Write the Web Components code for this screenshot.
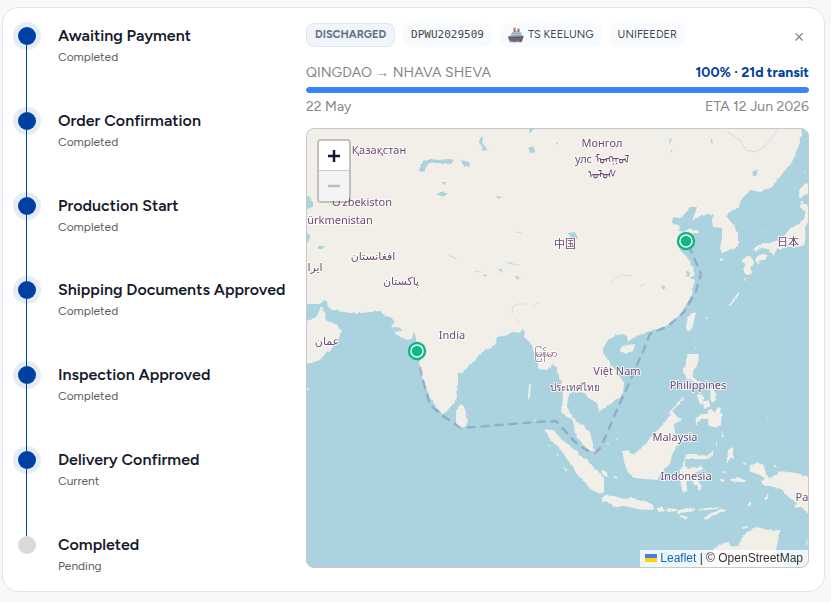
<!DOCTYPE html>
<html lang="en">
<head>
<meta charset="utf-8">
<meta name="viewport" content="width=device-width, initial-scale=1">
<title>Shipment tracking</title>
<style>
  body { margin: 7px 6px 10px 2px; background: #f8f8f8; color: #15192b; font: 14px/20px Figtree, Inter, "Liberation Sans", sans-serif; }
  .arrow { font-family: "Liberation Sans", sans-serif; line-height: 1; }
</style>
</head>
<body>
<shipment-card>
  <step-list slot="steps">
    <step-item status="Completed">Awaiting Payment</step-item>
    <step-item status="Completed">Order Confirmation</step-item>
    <step-item status="Completed">Production Start</step-item>
    <step-item status="Completed">Shipping Documents Approved</step-item>
    <step-item status="Completed">Inspection Approved</step-item>
    <step-item status="Current">Delivery Confirmed</step-item>
    <step-item status="Pending" pending>Completed</step-item>
  </step-list>
  <tag-chip slot="tags" kind="state">DISCHARGED</tag-chip>
  <tag-chip slot="tags" kind="code">DPWU2029509</tag-chip>
  <tag-chip slot="tags"><ship-icon></ship-icon>TS KEELUNG</tag-chip>
  <tag-chip slot="tags">UNIFEEDER</tag-chip>
  <voyage-progress slot="progress" value="100">
    <span slot="route">QINGDAO <span class="arrow">→</span> NHAVA SHEVA</span>
    <span slot="summary">100% · 21d transit</span>
    <span slot="from">22 May</span>
    <span slot="to">ETA 12 Jun 2026</span>
  </voyage-progress>
  <route-map slot="map"></route-map>
</shipment-card>

<script>
const define = (name, html) => {
  const template = document.createElement('template');
  template.innerHTML = html;
  customElements.define(name, class extends HTMLElement {
    connectedCallback() {
      if (this.shadowRoot) return;
      this.attachShadow({ mode: 'open' }).append(template.content.cloneNode(true));
      const status = this.shadowRoot.querySelector('[data-status]');
      if (status) status.textContent = this.getAttribute('status');
      const bar = this.shadowRoot.querySelector('progress');
      if (bar) bar.value = Number(this.getAttribute('value'));
    }
  });
};

define('shipment-card', `
<style>
  :host { display: grid; grid-template-columns: 268px minmax(0, 1fr); gap: 20px; padding: 15px; background: #fff; border: 1px solid #d9e5f2; border-radius: 16px; }
  section { display: flex; flex-direction: column; padding-bottom: 8px; }
  header { display: flex; justify-content: space-between; align-items: center; margin-bottom: 16px; }
  .tags { display: flex; gap: 8px; }
  button { width: 20px; height: 24px; padding: 4px 0 0; border: 0; background: none; color: #8a8a8a; font: 18px/20px "Liberation Sans", sans-serif; cursor: pointer; }
</style>
<slot name="steps"></slot>
<section>
  <header><div class="tags"><slot name="tags"></slot></div><button type="button" aria-label="Close">×</button></header>
  <slot name="progress"></slot>
  <slot name="map"></slot>
</section>`);

define('step-list', `
<style>
  :host { display: flex; flex-direction: column; padding-top: 4px; }
</style><slot></slot>`);

define('step-item', `
<style>
  :host { display: flex; gap: 22px; flex: 1 0 0; }
  :host([pending]) { flex: none; }
  .rail { display: flex; flex-direction: column; align-items: center; width: 18px; }
  .dot { flex: none; width: 18px; height: 18px; border-radius: 50%; background: #0040a5; box-shadow: 0 0 0 5px #0040a51a; }
  .line { flex: 1; width: 1px; margin-right: 1px; background: #0040a5; }
  :host([pending]) .dot { background: #d9d9d9; box-shadow: none; }
  :host([pending]) .line { display: none; }
  h3 { margin: 0 0 4px; font-size: 16px; line-height: 18px; font-weight: 600; white-space: nowrap; }
  p { margin: 0; padding-bottom: 1px; color: #5b5d63; font-size: 12px; line-height: 17px; }
</style>
<div class="rail"><span class="dot"></span><span class="line"></span></div>
<div><h3><slot></slot></h3><p data-status></p></div>`);

define('tag-chip', `
<style>
  :host { display: flex; align-items: center; gap: 4px; box-sizing: border-box; height: 24px; padding: 0 8px; border-radius: 8px; background: #f8fbfe; color: #44474d; font-size: 11px; line-height: 16px; white-space: nowrap; }
  :host([kind=state]) { background: #f1f5f9; border: 1px solid #dce8f2; color: #60718c; font-weight: 700; }
  :host([kind=code]) { font-family: "DejaVu Sans Mono", monospace; }
</style><slot></slot>`);

define('ship-icon', `
<style>:host { display: block; width: 16px; height: 16px; } svg { display: block; width: 100%; height: 100%; }</style>
<svg viewBox="0 0 45 45" aria-hidden="true">
  <path d="M16 4h5v10h-5zM27 6h5v8h-5z" fill="#6e5b60"/><path d="M15 2h7v4h-7zM26 4h7v4h-7z" fill="#e59845"/>
  <path d="M12 15l12-4 12 4 4 11H6z" fill="#90a9b7"/><path d="M12 16h26M8 21h32" stroke="#c2d1d9" stroke-width="2"/>
  <path d="M0 26l7 1 32-1 5-2-2 9H2z" fill="#47576a"/><path d="M1 32h41l-3 10H6z" fill="#785b61"/><path d="M4 39q5-3 9 0t9 0 9 0 9 0l-2 4H6z" fill="#7191a7"/>
</svg>`);

define('voyage-progress', `
<style>
  :host { display: block; margin-bottom: 11px; color: #858585; font-size: 14px; line-height: 20px; }
  div { display: flex; justify-content: space-between; height: 20px; }
  .sum { color: #0040a0; font-weight: 700; }
  progress { display: block; appearance: none; width: 100%; height: 6px; margin: 4px 0; border: 0; border-radius: 3px; background: #e5edf7; overflow: hidden; }
  progress::-webkit-progress-bar { background: #e5edf7; }
  progress::-webkit-progress-value { background: #3b82f6; border-radius: 3px; }
</style>
<div><slot name="route"></slot><span class="sum"><slot name="summary"></slot></span></div>
<progress max="100" aria-label="Voyage progress"></progress>
<div><slot name="from"></slot><slot name="to"></slot></div>`);

define('route-map', `
<style>
  :host { display: block; position: relative; flex: 1; min-height: 438px; border: 1px solid #c5c9cc; border-radius: 8px; overflow: hidden; background: #aad3df; }
  svg.map { display: block; position: absolute; inset: 0; width: 100%; height: 100%; }
  .zoom { position: absolute; left: 10px; top: 10px; border: 2px solid #0003; background-clip: padding-box; border-radius: 4px; overflow: hidden; }
  .zoom button { display: grid; place-items: center; width: 30px; height: 30px; padding: 0; border: 0; background: #fff; color: #15192b; }
  .zoom button:first-child { border-bottom: 1px solid #ccc; }
  .zoom button:disabled { background: #f4f4f4; color: #bbb; }
  .zoom svg { width: 12px; height: 12px; }
  .credit { position: absolute; right: 0; bottom: 0; padding: 0 5px; background: #fffc; color: #333; font: 12px/17px "Liberation Sans", Arial, sans-serif; white-space: nowrap; }
  a { color: #0d6cb8; text-decoration: none; }
  .flag { width: 12px; height: 8px; margin-right: 3px; }
  text { font: 11px "Noto Sans", "DejaVu Sans", "Noto Sans CJK SC", sans-serif; fill: #6d4a70; stroke: #fff; stroke-opacity: .8; stroke-width: 2px; stroke-linejoin: round; paint-order: stroke; text-anchor: middle; }
  .small { font-size: 10px; }
</style>
<svg class="map" viewBox="307 129 501 438" preserveAspectRatio="xMidYMid slice" role="img" aria-label="Sea route from Qingdao to Nhava Sheva">
  <defs><filter id="coast" x="-5%" y="-5%" width="110%" height="110%"><feTurbulence type="fractalNoise" baseFrequency=".22" numOctaves="2" seed="4"/><feDisplacementMap in="SourceGraphic" scale="3" xChannelSelector="R" yChannelSelector="G"/></filter></defs>
  <g fill="#f2efe9" filter="url(#coast)">
    <path d="M295 115V303L312 304 320 304 323 301 327 302 328 307 333 310 350 313 362 313 380 311 385 316 393 318 395 322 391 326 400 328 403 331 394 331 400 337 407 340 412 338 414 332 416 338 416 350 418 360 422 377 428 393 433 402 437 408 443 414 446 412 452 405 456 402 457 395 458 383 458 373 463 372 468 367 478 357 485 350 495 345 497 337 507 335 513 332 520 333 523 328 525 337 532 345 535 357 538 363 538 369 547 370 552 365 554 363 557 370 560 380 562 385 563 397 562 407 562 413 567 417 572 419 574 425 575 434 582 443 590 451 596 453 594 448 592 440 590 432 583 425 578 423 573 418 570 412 567 407 568 398 570 392 577 392 585 393 588 398 597 402 599 412 605 407 617 400 623 393 624 383 618 373 610 363 603 353 603 348 608 340 617 335 623 334 627 336 628 343 632 338 640 335 650 331 663 327 673 321 682 312 687 303 692 295 693 287 695 280 690 278 695 274 692 267 687 257 680 250 677 243 682 235 690 234 699 233 698 231 690 228 683 232 678 230 680 226 672 223 673 218 682 217 690 207 697 207 695 213 692 220 702 215 713 214 712 220 713 227 722 228 722 237 720 248 722 253 735 248 738 245 738 235 735 227 727 217 728 213 739 207 741 200 750 190 755 191 760 192 772 187 783 173 792 162 798 148 801 137 803 115Z"/>
    <path d="M295 324L313 319 319 312 321 306 323 309 326 320 335 324 342 330 339 338 334 343 331 351 326 353 320 360 311 363 295 366ZM306 388l5 1-5 2z"/>
    <path d="M460 404l5 5 3 12-3 6-5 1-4-5v-12zM628 345l7-1-2 7-8 3-5-3 2-5zM693 312l3 1-4 15-3 4-3-6 2-9z"/>
    <g transform="translate(640 120) scale(.3333)">
      <path d="M475 257l14-7 13 6 8 30-7 22-8 14 2 30-4 22-22 8-17-1-14-2-20 10-7-5-11 20-14-8 1-7-22-7-20 12-7-6 10-9 19-10 20 1 21-9 13 4 9-17 22-27 23-8 16-18 4-20zM480 203l14-9 10-3 5 17 5 13-17 2-14 12-6-3 1-17zM305 420l21-13 7 3 10 18-9 12-3 21-14 3-6-18 5-13zM350 408l20-7 13 5-9 15-11-2-8 14-9-11zM484 240l7 4-3 6-8-4zM239 417l14-3-5 7-8 2z"/>
    </g>
    <g transform="translate(640 270) scale(.3333)">
      <path d="M143 253l29-2 4 14-4 22-11 13-5 20 15 7 19 14-9 5-20-12-20-7-10-20-3-11 8-6zM170 372l16 2 5 16-6 16-10-16zM213 354l14 13-1 23-11 8-4-29zM187 396l20-5 4 18-17 8zM237 406l8 25-2 30-16 14-20-10-4-20-23 4-12 16 1-23 15-9 18-2 10-12 13 7zM86 428l23-24 23-26-3 16-21 17-20 20zM309-5l20-1-5 19-9-2zM310 28l11-7-3 12zM264 109l30-41 4 3-26 36zM197 144l9-3-6 7z"/>
    </g>
    <g transform="translate(490 420) scale(.3333)">
      <path d="M163 28l28 3 28 31 30 20 21 24 21 12 12 18 16 14 23 22v48h-16l-26-14-25-31-16-14-9-21-20-25-18-25-31-29zM331 150l14 3 10 15-10 2zM372 168l10 2-3 7-9-3zM196 98l10 6-3 8zM218 139l9 7 5 8-9-3zM170 73l13 6-4 3zM334 236l11-11 32 4 24 7 28-2 23 9 4 10 36 12-4 5-37-2-49-10-31 1-22-15-14-1zM500 264l17 1 6 9-17-1zM398 94l14-4 8 10 13 2 34-31 25-29 25-29 11-15 13-11 2-17 14 14 20 16-26 13 6 31 21 18-18 17-15 29-5 25-25 23-12 24-31-2-41-5-16-14-8-20-7-25z"/>
    </g>
    <g transform="translate(640 420) scale(.3333)">
      <path d="M-5 242l30 4 20 18-50-8zM50 265l14-3 14 10-22 5zM80 266l24-1 10 8-31 3zM110 272l30-8 26 2-2 7-50 7zM168 268l50-6 35 1-52 7zM115 286l20 1 15 10-15 1zM190 295l22-15 33-13 12 2-32 17-29 15zM131 126l6-17 18-8 46 6 20-13-4 17-20 7-61-1-2 22 13 7 36-7 7 8-34 16 6 12 14 4 4 14-12 3-20-20-9 8 3 32-14 3-6-30-5-24zM172 189l13 7-5 18-9-10zM205 0l24 5-9 14-13-6zM265 88l16-7-3 20 5 18-10-8-10 22-3-19zM241 177l15 3-6 7-11-4zM269 178l30-4 20 8-7 5-36-3zM310 127l12 4-7 5zM328 136l27-7 18 10 5 22 10 14 39-21 42 5 48 14v111l-15-5-17-18-22 2 5-15-20-15-23-25-26-8-27-4-8-11 12-10-26-15-20-4zM373 237l8-16 5 6-6 14zM399 136l14 5-9 2zM324 252l9-8 1 7-10 10zM215 392l24-19 26-8 10 15 20-3 14-30 23-15 17-13 26 9 25 5 20-4-8 43-5 22 30 51H190zM307 321l18-2-4 6-14 1zM500 355l3 20-5-2z"/>
    </g>
  </g>
  <g fill="#aad3df" filter="url(#coast)">
    <path d="M420 169l3-8 7-2 9 1 10-1 5 1-3 4-11-1-11 0-5 9-5-1zM436 194l8-3 4 2-5 4zM461 160l8 2 1 5-7-2zM440 182l7 0-2 3zM475 147l9 3-5-9 3-5 1 2-1 4 6 9-13-4zM306 195l5 3 3 8-8 4zM306 231l4 5-2 8-2-3zM318 246l7 0-2 3-5 0zM529 148l4-2 2 6-5 1zM527 129l8 0-4 3zM568 233l7-1 3 6-8 0zM753 171l5-1-2 6-4 0zM668 140l4-2-2 6zM670 149l3 2-2 1zM497 196l5 1-4 2zM498 269l4 0-1 3zM515 276l5 1-3 2zM555 143l3-1-1 3zM482 148l3 1-2 3zM480 139l3 2-2 1zM711 138l2 5-2 2zM662 285l4 2-3 3zM686 271l4 1-1 5-3-1zM483 274l4 1-2 2zM392 255l1 1-2 0zM510 262l3 1-2 1z"/>
  </g>
  <path d="M727 132l13 8 6 10 10 2 8-5 7-8 7-10M512 313l1-7 5-2 8 0M533 307l4-4 4-1M505 262l8 2 7 1M611 283l9-8 12 1M515 232l7 1M448 255l9 4M474 271l7 1M640 286l5-2M516 319l4 4" fill="none" stroke="#aad3df" stroke-opacity=".55" stroke-width="1"/>
  <g fill="#f2efe9"><path d="M529 384l2 1-1 10-1 5-1-2zM534 419l2 2-2 0zM616 438l2 1-1 2zM607 443l2 0-1 2zM767 417l1 1-1 1zM786 405l2 0-1 1zM722 431l2 6-2 0zM716 439l1 8-1-1zM693 419l10-1-4 2zM694 341l1 1-1 1zM695 347l1 1-1 1zM721 471l6 1-4 1zM750 272l2 1-2 2zM804 171l2 1-1 1zM764 231l2 0-1 1z"/></g>
  <path d="M689 246L701 274 696 291 684 312 668 326 650 334 644 349 629 383 617 410 601 447 595 453 586 450 575 442 556 421 535 422 500 425 461 428 443 416 430 405 423 380 417 354" fill="none" stroke="#64749c" stroke-opacity=".38" stroke-width="2.5" stroke-linecap="round" stroke-dasharray="7 7"/>
  <g>
    <text x="379" y="154">Қазақстан</text><text x="362" y="206">O‘zbekiston</text><text x="340" y="224">ürkmenistan</text>
    <text x="373" y="260">افغانستان</text><text x="315" y="271">ایرا</text><text x="401" y="285">پاکستان</text><text x="327" y="345">عمان</text>
    <text x="602" y="147">Монгол</text><text x="602" y="163">улс ᠮᠣᠩᠭᠣᠯ</text><text x="602" y="178">ᠤᠯᠤᠰ</text>
    <text x="565" y="248" lang="zh">中国</text><text x="788" y="246" lang="ja">日本</text><text x="452" y="339">India</text>
    <text x="545" y="357">မြန်မာ</text><text x="617" y="375">Việt Nam</text><text class="small" x="575" y="391">ประเทศไทย</text>
    <text x="698" y="389">Philippines</text><text x="675" y="441">Malaysia</text><text x="686" y="480">Indonesia</text>
    <text x="802" y="501">Pa</text>
  </g>
  <g fill="#fff" stroke="#10b981" stroke-width="2.5"><circle cx="686" cy="241" r="8"/><circle cx="417" cy="351" r="8"/></g>
  <g fill="#10b981"><circle cx="686" cy="241" r="5.3"/><circle cx="417" cy="351" r="5.3"/></g>
</svg>
<div class="zoom">
  <button type="button" aria-label="Zoom in"><svg viewBox="0 0 12 12"><path d="M6 0v12M0 6h12" stroke="currentColor" stroke-width="2.5"/></svg></button>
  <button type="button" aria-label="Zoom out" disabled><svg viewBox="0 0 12 12"><path d="M0 6h12" stroke="currentColor" stroke-width="2.5"/></svg></button>
</div>
<div class="credit"><a href="#leaflet"><svg class="flag" viewBox="0 0 12 8" aria-hidden="true"><path fill="#4c7be1" d="M0 0h12v4H0z"/><path fill="#ffd500" d="M0 4h12v4H0z"/></svg>Leaflet</a> | © OpenStreetMap</div>`);
</script>
</body>
</html>
